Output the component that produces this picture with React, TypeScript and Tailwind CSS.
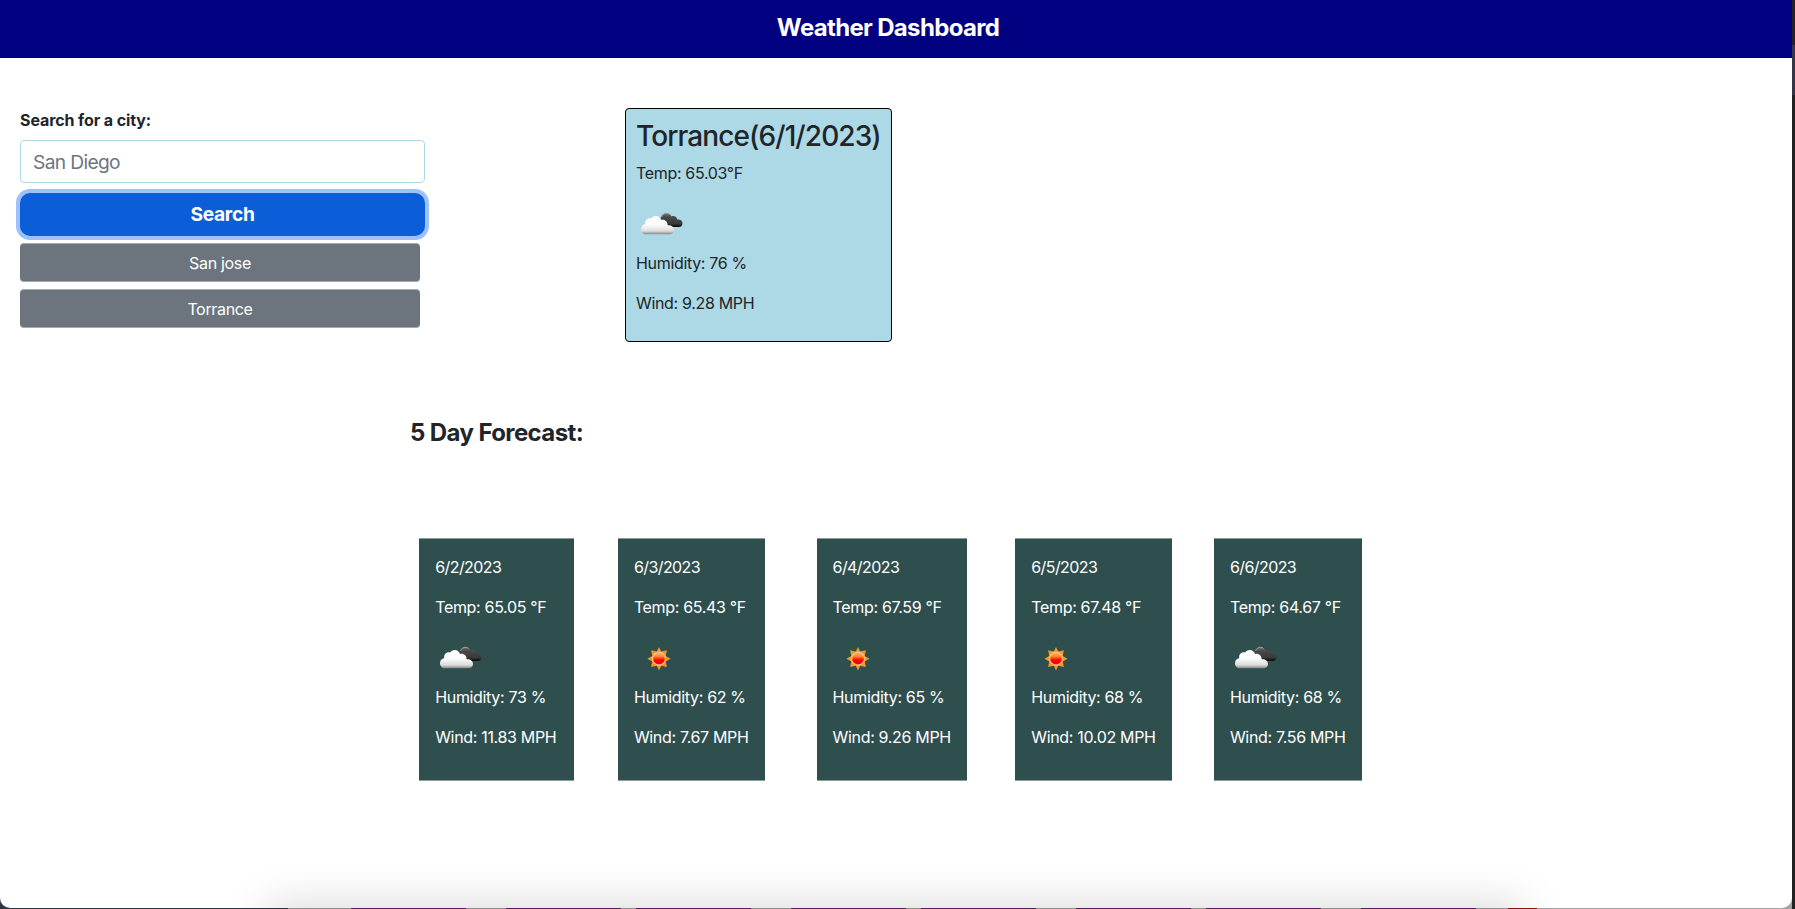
import React from "react";

type Sky = "clouds" | "sun";
type Day = { date: string; temp: string; humidity: string; wind: string; sky: Sky; width: string };

const days: Day[] = [
  { date: "6/2/2023", temp: "65.05", humidity: "73", wind: "11.83", sky: "clouds", width: "w-[155px]" },
  { date: "6/3/2023", temp: "65.43", humidity: "62", wind: "7.67", sky: "sun", width: "w-[147px]" },
  { date: "6/4/2023", temp: "67.59", humidity: "65", wind: "9.26", sky: "sun", width: "w-[150px]" },
  { date: "6/5/2023", temp: "67.48", humidity: "68", wind: "10.02", sky: "sun", width: "w-[157px]" },
  { date: "6/6/2023", temp: "64.67", humidity: "68", wind: "7.56", sky: "clouds", width: "w-[148px]" },
];

const dockMargins = [
  "ml-[63px]",
  "ml-[40px]",
  "ml-[15px]",
  "ml-[40px]",
  "ml-[15px]",
  "ml-[40px]",
  "ml-[15px]",
  "ml-[40px]",
];

function Clouds() {
  return (
    <svg width="50" height="50" viewBox="0 0 50 50" aria-hidden="true">
      <defs>
        <linearGradient id="front" x1="0" y1="0" x2="0" y2="1">
          <stop offset="0" stopColor="#ffffff" />
          <stop offset="0.5" stopColor="#fafafa" />
          <stop offset="0.82" stopColor="#dcdcdc" />
          <stop offset="1" stopColor="#858585" />
        </linearGradient>
        <linearGradient id="back" x1="0" y1="0" x2="0" y2="1">
          <stop offset="0" stopColor="#777777" />
          <stop offset="0.3" stopColor="#484848" />
          <stop offset="0.75" stopColor="#3a3a3a" />
          <stop offset="1" stopColor="#080808" />
        </linearGradient>
      </defs>
      <g transform="translate(0.5 -2.5)">
        <path d="M24 20.5C24.5 16.5 27 14.4 30 14.4C32.4 14.4 34 15.8 35 18C37.5 16.7 40.3 18.3 40.7 21.1C43.5 20.5 46 22 46 24.8C46 27 44.6 28.5 42.4 28.5H32Z" fill="url(#back)" />
        <path d="M25 18.5C26 16 27.8 14.8 30 14.8C31.2 14.8 32.2 15.2 33 16" fill="none" stroke="#a5a5a5" strokeWidth="0.9" />
        <path d="M9.5 35.8C6.5 35.8 4.5 33.7 4.5 30.8C4.5 28 6.2 26.2 8.7 25.8C8.2 22.2 10.3 19.8 13.3 19.8C13.8 19.8 14.2 19.9 14.6 20C15.7 18.2 17 17.4 19.2 17.4C22 17.4 23.8 19.1 24.5 21.6C28 20.5 31.2 23 31.1 26.8C34.6 26.4 37.5 28.3 37.5 31.4C37.5 34 35.4 35.8 32.8 35.8Z" fill="url(#front)" />
      </g>
    </svg>
  );
}

function Sun() {
  return (
    <svg width="50" height="50" viewBox="0 0 50 50" aria-hidden="true">
      <defs>
        <linearGradient id="disc" x1="0" y1="0" x2="0" y2="1">
          <stop offset="0" stopColor="#ffb545" />
          <stop offset="0.3" stopColor="#ff8f38" />
          <stop offset="0.52" stopColor="#ff2a00" />
          <stop offset="0.62" stopColor="#ff0000" />
          <stop offset="1" stopColor="#ff0000" />
        </linearGradient>
      </defs>
      <g transform="translate(0 -1)">
        <path d="M25 13L27.2 17.6L32.9 16.3L31.7 22L36.6 24.7L31.7 27.4L32.9 33.1L27.2 31.8L25 36.4L22.8 31.8L17.1 33.1L18.3 27.4L13.4 24.7L18.3 22L17.1 16.3L22.8 17.6Z" fill="#f39a20" />
        <circle cx="25" cy="24.7" r="6.4" fill="url(#disc)" stroke="#ffc7a0" strokeWidth="1.1" />
      </g>
    </svg>
  );
}

function ForecastCard({ day }: { day: Day }) {
  return (
    <div className="w-[198.7px] shrink-0">
      <div className={`${day.width} h-[243px] border-y border-[#8a9d9d] bg-[#2f4f4f] px-4 pt-4 text-white whitespace-nowrap`}>
        <p className="mb-4 tracking-[-0.58px]">{day.date}</p>
        <p className="mb-4">Temp: {day.temp} °F</p>
        <div className="h-[50px]">{day.sky === "sun" ? <Sun /> : <Clouds />}</div>
        <p className="mb-4">Humidity: {day.humidity} %</p>
        <p>Wind: {day.wind} MPH</p>
      </div>
    </div>
  );
}

export default function App() {
  return (
    <div className="relative h-[909px] w-[1795px] overflow-hidden bg-[#222222] font-['Inter','Liberation_Sans',sans-serif] text-base leading-6 tracking-[-0.33px] text-[#212529]">
      <div className="absolute right-0 top-[45px] h-[50px] w-[3px] bg-[#343546]" />
      <div className="absolute bottom-0 left-0 flex h-3 w-[288px] bg-[#2b3440]" />
      <div className="absolute bottom-0 right-[3px] h-3 w-[255px] bg-[#a3a3a3]" />
      <div className="absolute bottom-0 left-[288px] flex h-px w-[1249px] bg-[#8f8f8f]">
        {dockMargins.map((margin, index) => (
          <div key={index} className={`${margin} h-px w-[115px] shrink-0 bg-[#5a1a66]`} />
        ))}
        <div className="ml-auto h-px w-[29px] shrink-0 bg-[#8b1508]" />
      </div>
      <div className="relative h-[908px] w-[1792px] overflow-hidden rounded-b-[10px] bg-white">
        <div className="absolute left-[280px] top-[918px] h-5 w-[1230px] shadow-[0_0_44px_14px_rgba(0,0,0,0.15)]" />
        <header className="flex h-[58px] justify-center bg-[#000080] pr-4 pt-[10px]">
          <h1 className="text-2xl font-bold leading-9 tracking-[-0.67px] text-white">Weather Dashboard</h1>
        </header>
        <main>
          <div className="flex h-[290px] pl-5 pt-[50px]">
            <aside className="w-[405px]">
              <label className="block h-8 font-bold leading-6 tracking-[-0.1px]">Search for a city:</label>
              <input
                className="block h-[43px] w-full rounded-[4px] border border-[#add8e6] px-3 text-[19.2px] tracking-[-0.65px] placeholder:text-[#6c757d] placeholder:opacity-100"
                placeholder="San Diego"
              />
              <button className="mt-[10px] block h-[43px] w-full rounded-[10px] bg-[#0b5ed7] pb-px text-[19.2px] font-bold tracking-[-0.3px] text-white shadow-[0_0_0_4px_#9dc1fd]">Search</button>
              <button className="mt-[7px] block h-[39px] w-[400px] rounded-[4px] border-y border-[#a5abb0] bg-[#6c757d] text-white">San jose</button>
              <button className="mt-[7px] block h-[39px] w-[400px] rounded-[4px] border-y border-[#a5abb0] bg-[#6c757d] text-white">Torrance</button>
            </aside>
            <section className="ml-[200px] h-[234px] w-[267px] rounded-[4px] border border-black bg-[#add8e6] px-[10px] pt-[10px] whitespace-nowrap">
              <h2 className="mb-2 text-[28px] font-medium leading-[34px] tracking-[-0.9px]">Torrance(6/1/2023)</h2>
              <p className="mb-4">Temp: 65.03°F</p>
              <div className="h-[50px]"><Clouds /></div>
              <p className="mb-4">Humidity: 76 %</p>
              <p>Wind: 9.28 MPH</p>
            </section>
          </div>
          <h2 className="mt-[67px] pl-[410px] text-2xl font-bold leading-9 tracking-[-0.6px]">5 Day Forecast:</h2>
          <div className="mt-[87px] flex pl-[419.2px]">
            {days.map((day) => <ForecastCard key={day.date} day={day} />)}
          </div>
        </main>
      </div>
    </div>
  );
}
